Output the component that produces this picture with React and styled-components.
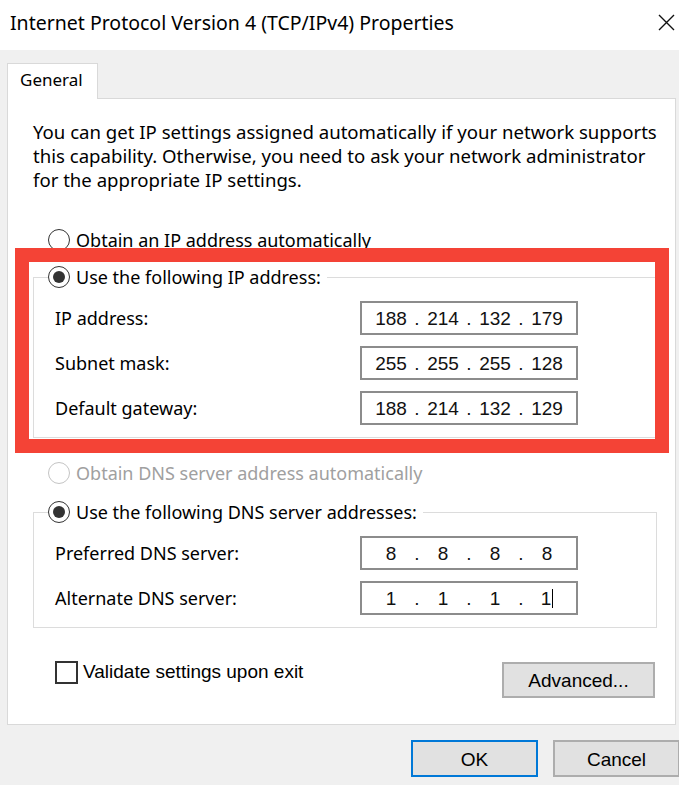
import React from 'react';
import styled, { createGlobalStyle } from 'styled-components';

const GlobalStyle = createGlobalStyle`
  html, body {
    margin: 0;
    padding: 0;
    background: #f0f0f0;
    overflow: hidden;
  }
  * { box-sizing: border-box; }
`;

const UI_FONT = `"Noto Sans", "Open Sans", sans-serif`;
const PIXEL_FONT = `"Liberation Sans", Arial, sans-serif`;

const Dialog = styled.div`
  width: 683px;
  height: 785px;
  background: #f0f0f0;
  font-family: ${UI_FONT};
  font-size: 18px;
  color: #000;
`;

const TitleBar = styled.div`
  height: 50px;
  background: #fff;
  display: flex;
  align-items: center;
  justify-content: space-between;
  padding: 0 8px 0 10px;
`;

const Title = styled.div`
  font-size: 19.5px;
  padding-bottom: 5px;
`;

const CloseIcon = () => (
  <svg width="17" height="17" viewBox="0 0 17 17" style={{ marginBottom: 6 }}>
    <path d="M1 1 L16 16 M16 1 L1 16" stroke="#111" strokeWidth="1.4" fill="none" />
  </svg>
);

const TabStrip = styled.div`
  display: flex;
  padding: 13px 0 0 7px;
`;

const Tab = styled.div`
  width: 91px;
  height: 36px;
  margin-bottom: -1px;
  background: #fff;
  border: 1px solid #d9d9d9;
  border-bottom: none;
  padding: 4px 0 0 12px;
  font-size: 17px;
  position: relative;
  z-index: 1;
`;

const Panel = styled.div`
  position: relative;
  margin: 0 7px;
  height: 627px;
  background: #fff;
  border: 1px solid #d9d9d9;
  padding: 21px 18px 0 25px;
`;

const Intro = styled.p`
  margin: 0;
  line-height: 24px;
  font-size: 18.6px;
  white-space: nowrap;
`;

const RadioRow = styled.label`
  display: flex;
  align-items: center;
  height: 24px;
  margin-top: ${p => p.$mt}px;
  padding-left: 15px;
  gap: 6px;
  color: ${p => (p.$disabled ? '#a0a0a0' : '#000')};
`;

const RadioMark = styled.span`
  width: 22px;
  height: 22px;
  border-radius: 50%;
  border: 1.5px solid ${p => (p.$disabled ? '#c4c4c4' : '#333')};
  background: #fff;
  display: flex;
  align-items: center;
  justify-content: center;
  flex: none;

  &::after {
    content: '';
    width: 12px;
    height: 12px;
    border-radius: 50%;
    background: #333;
    display: ${p => (p.$checked ? 'block' : 'none')};
  }
`;

const Group = styled.fieldset`
  margin: ${p => p.$mt}px 0 0 0;
  border: 1px solid #dcdcdc;
  padding: 12px 0 12px 21px;
  min-width: 0;
`;

const Legend = styled.legend`
  padding: 0 6px 0 0;
  margin-left: -7px;
  display: flex;
  align-items: center;
  gap: 6px;
  height: 24px;
`;

const Rows = styled.div`
  display: flex;
  flex-direction: column;
  gap: 11px;
`;

const FieldRow = styled.div`
  display: grid;
  grid-template-columns: 305px 218px;
  align-items: center;
`;

const IpBox = styled.div`
  width: 218px;
  height: 34px;
  border: 2px solid #8c8c8c;
  background: #fff;
  display: flex;
  align-items: center;
  padding: 2px 0 0 8px;
  font-family: ${PIXEL_FONT};
  font-size: 19px;
  color: #111;
`;

const Octet = styled.span`
  width: 42px;
  text-align: center;
  white-space: nowrap;
`;

const Dot = styled.span`
  width: 10px;
  text-align: center;
`;

const Caret = styled.span`
  display: inline-block;
  width: 0;
  height: 19px;
  border-right: 1.5px solid #000;
  margin-left: 1px;
  vertical-align: -3px;
`;

const Highlight = styled.div`
  position: absolute;
  left: 7px;
  top: 149px;
  width: 654px;
  height: 205px;
  border: 14px solid #f44336;
  pointer-events: none;
`;

const BottomRow = styled.div`
  display: flex;
  justify-content: space-between;
  align-items: flex-start;
  margin-top: 32px;
  padding: 0 2px 0 22px;
`;

const CheckLabel = styled.label`
  display: flex;
  align-items: center;
  gap: 5px;
  height: 24px;
  font-family: ${PIXEL_FONT};
  font-size: 19px;
`;

const CheckBox = styled.span`
  width: 23px;
  height: 23px;
  border: 2px solid #333;
  background: #fff;
  flex: none;
`;

const Button = styled.button`
  width: ${p => p.$w}px;
  height: ${p => p.$h}px;
  margin-top: ${p => p.$mt || 0}px;
  background: #e1e1e1;
  border: ${p => (p.$primary ? '2px solid #0078d7' : '2px solid #adadad')};
  font-family: ${PIXEL_FONT};
  font-size: 19px;
  color: #000;
  padding: 2px 0 0 0;
`;

const Footer = styled.div`
  display: flex;
  justify-content: flex-end;
  gap: 15px;
  padding: 15px 3px 0 0;
`;

function IpField({ value, caret }) {
  const parts = value.split('.');
  return (
    <IpBox>
      {parts.map((p, i) => (
        <React.Fragment key={i}>
          {i > 0 && <Dot>.</Dot>}
          <Octet>
            {p}
            {caret && i === parts.length - 1 && <Caret />}
          </Octet>
        </React.Fragment>
      ))}
    </IpBox>
  );
}

function Radio({ checked, disabled, children }) {
  return (
    <>
      <RadioMark $checked={checked} $disabled={disabled} />
      <span>{children}</span>
    </>
  );
}

const ipRows = [
  ['IP address:', '188.214.132.179'],
  ['Subnet mask:', '255.255.255.128'],
  ['Default gateway:', '188.214.132.129'],
];

const dnsRows = [
  ['Preferred DNS server:', '8.8.8.8'],
  ['Alternate DNS server:', '1.1.1.1', true],
];

export default function App() {
  return (
    <Dialog>
      <GlobalStyle />
      <TitleBar>
        <Title>Internet Protocol Version 4 (TCP/IPv4) Properties</Title>
        <CloseIcon />
      </TitleBar>
      <TabStrip>
        <Tab>General</Tab>
      </TabStrip>
      <Panel>
        <Intro>
          You can get IP settings assigned automatically if your network supports<br />
          this capability. Otherwise, you need to ask your network administrator<br />
          for the appropriate IP settings.
        </Intro>

        <RadioRow $mt={36}>
          <Radio>Obtain an IP address automatically</Radio>
        </RadioRow>

        <Group $mt={13}>
          <Legend>
            <Radio checked>Use the following IP address:</Radio>
          </Legend>
          <Rows>
            {ipRows.map(([label, value]) => (
              <FieldRow key={label}>
                <span>{label}</span>
                <IpField value={value} />
              </FieldRow>
            ))}
          </Rows>
        </Group>

        <RadioRow $mt={23} $disabled>
          <Radio disabled>Obtain DNS server address automatically</Radio>
        </RadioRow>

        <Group $mt={15}>
          <Legend>
            <Radio checked>Use the following DNS server addresses:</Radio>
          </Legend>
          <Rows>
            {dnsRows.map(([label, value, caret]) => (
              <FieldRow key={label}>
                <span>{label}</span>
                <IpField value={value} caret={caret} />
              </FieldRow>
            ))}
          </Rows>
        </Group>

        <BottomRow>
          <CheckLabel>
            <CheckBox />
            Validate settings upon exit
          </CheckLabel>
          <Button $w={153} $h={36} $mt={2}>Advanced...</Button>
        </BottomRow>

        <Highlight />
      </Panel>
      <Footer>
        <Button $w={127} $h={37} $primary>OK</Button>
        <Button $w={127} $h={37}>Cancel</Button>
      </Footer>
    </Dialog>
  );
}
